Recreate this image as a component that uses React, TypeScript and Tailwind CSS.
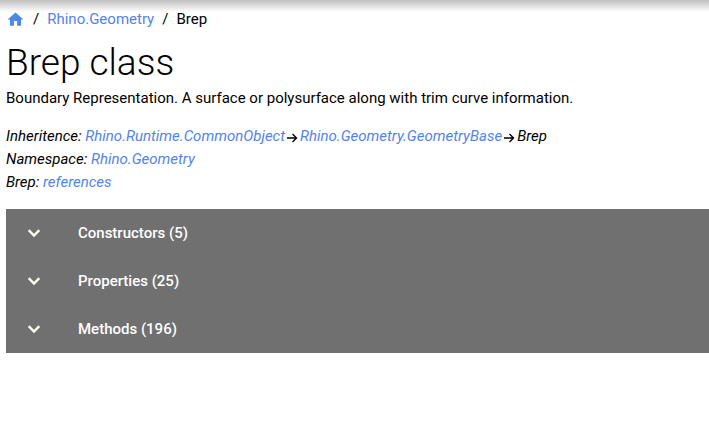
import type { ReactNode } from "react";
import { MdHome } from "react-icons/md";

const sections = [
    {name: "Constructors", count: 5},
    {name: "Properties", count: 25},
    {name: "Methods", count: 196},
];

function DocLink({children}: { children: ReactNode }) {
    return (
        <a href="#" className="text-[#5484e6]">
            {children}
        </a>
    );
}

function Arrow() {
    return (
        <svg viewBox="0 0 14 14" aria-hidden="true" className="mr-px inline-block size-[14px] align-[-4px]">
            <path d="M2 7h9.5M7.5 3l4 4-4 4" fill="none" stroke="currentColor" strokeWidth="1.4"/>
        </svg>
    );
}

function Chevron() {
    return (
        <svg viewBox="0 0 24 24" aria-hidden="true" className="size-6 text-[#fffaf0]">
            <path d="M6.7 9.2l5.3 5.3 5.3-5.3" fill="none" stroke="currentColor" strokeWidth="2.4"/>
        </svg>
    );
}

export default function App() {
    return (
        <div className="min-h-screen bg-white font-[Roboto,sans-serif] text-[15px] leading-[22px] text-black">
            <div className="-mb-1 h-3 bg-gradient-to-b from-[#c0c0c0] to-white"/>
            <main className="pl-[6px]">
                <nav aria-label="Breadcrumb">
                    <ol className="flex items-center gap-2">
                        <li>
                            <a href="#" aria-label="Home" className="block text-[#4b89e8]">
                                <MdHome className="size-[19px]"/>
                            </a>
                        </li>
                        <li aria-hidden="true">/</li>
                        <li><DocLink>Rhino.Geometry</DocLink></li>
                        <li aria-hidden="true">/</li>
                        <li>Brep</li>
                    </ol>
                </nav>

                <h1 className="mt-2.5 mb-px text-[37px] leading-[46px] font-light">Brep class</h1>
                <p>Boundary Representation. A surface or polysurface along with trim curve information.</p>

                <div className="mt-4 leading-[23px] italic">
                    <p>
                        Inheritence: <DocLink>Rhino.Runtime.CommonObject</DocLink><Arrow/>
                        <DocLink>Rhino.Geometry.GeometryBase</DocLink><Arrow/>Brep
                    </p>
                    <p>Namespace: <DocLink>Rhino.Geometry</DocLink></p>
                    <p>Brep: <DocLink>references</DocLink></p>
                </div>

                <div className="mt-[15px] bg-[#707070] font-medium text-white">
                    {sections.map((section) => (
                        <button
                            key={section.name}
                            type="button"
                            aria-expanded="false"
                            className="flex h-12 w-full items-center gap-8 px-4 text-left"
                        >
                            <Chevron/>
                            {section.name} ({section.count})
                        </button>
                    ))}
                </div>
            </main>
        </div>
    );
}
